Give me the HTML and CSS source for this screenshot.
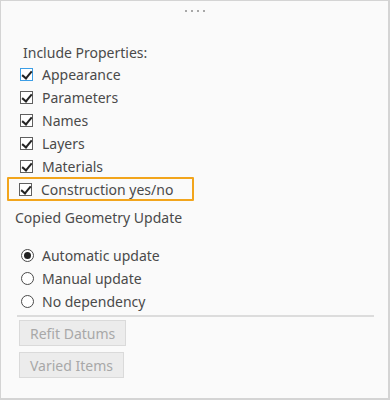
FILE: index.html
```html
<!DOCTYPE html>
<html>
  <head>
    <title>Copy Geometry Options</title>
    <link rel="stylesheet" href="styles.css">
  </head>
  <body>
    <div class="panel">
      <div class="grip"><span></span><span></span><span></span><span></span></div>
      <div class="section">
        <div class="heading">Include Properties:</div>
        <label class="option focused"><span class="box checked"></span>Appearance</label>
        <label class="option"><span class="box checked"></span>Parameters</label>
        <label class="option"><span class="box checked"></span>Names</label>
        <label class="option"><span class="box checked"></span>Layers</label>
        <label class="option"><span class="box checked"></span>Materials</label>
        <label class="option highlight"><span class="box checked"></span>Construction yes/no</label>
      </div>
      <div class="subtitle">Copied Geometry Update</div>
      <div class="radios">
        <label class="option"><span class="radio on"></span>Automatic update</label>
        <label class="option"><span class="radio"></span>Manual update</label>
        <label class="option"><span class="radio"></span>No dependency</label>
      </div>
      <div class="actions">
        <button disabled>Refit Datums</button>
        <button disabled>Varied Items</button>
      </div>
    </div>
  </body>
</html>
```

FILE: styles.css
```css
body {
  margin: 0;
  background-color: #fff;
  font-family: "Noto Sans", "Open Sans", sans-serif;
  font-size: 14px;
  color: #4a4a4a;
}

.panel {
  box-sizing: border-box;
  width: 390px;
  height: 400px;
  border: 1px solid #d4d4d4;
  border-right-width: 2px;
  border-bottom-width: 2px;
  background-color: #fafafa;
  padding: 0 14px;
}

.grip {
  display: flex;
  justify-content: center;
  gap: 4px;
  padding-top: 9px;
  height: 40px;
  box-sizing: border-box;
}

.grip span {
  width: 2px;
  height: 2px;
  background-color: #a8a8a8;
}

.section {
  padding-left: 4px;
}

.heading {
  height: 22px;
  line-height: 24px;
  padding-left: 4px;
}

.option {
  display: flex;
  align-items: center;
  height: 23px;
}

.box {
  box-sizing: border-box;
  width: 13px;
  height: 13px;
  border: 1px solid #5f5f5f;
  background-color: #fff;
  margin-left: 1px;
  margin-right: 9px;
  position: relative;
}

.box.checked::after {
  content: "";
  position: absolute;
  left: 3px;
  top: 0px;
  width: 4px;
  height: 8px;
  border: solid #222;
  border-width: 0 2px 2px 0;
  transform: rotate(40deg);
}

.focused .box {
  border-color: #3c9ee6;
}

.highlight {
  box-sizing: content-box;
  height: 20px;
  width: 174px;
  margin: -1px 0 -1px -12px;
  padding-left: 9px;
  border: 2px solid #f2a51c;
  border-radius: 1px;
}

.subtitle {
  padding-top: 6px;
  height: 24px;
  line-height: 24px;
}

.radios {
  padding: 14px 0 2px 4px;
  margin-left: 2px;
  border-bottom: 2px solid #dcdcdc;
}

.radio {
  box-sizing: border-box;
  width: 13px;
  height: 13px;
  border-radius: 50%;
  border: 1px solid #4a4a4a;
  background-color: #fff;
  margin-right: 8px;
  position: relative;
}

.radio.on::after {
  content: "";
  position: absolute;
  left: 2px;
  top: 2px;
  width: 7px;
  height: 7px;
  border-radius: 50%;
  background-color: #222;
}

.actions {
  display: flex;
  flex-direction: column;
  align-items: flex-start;
  gap: 6px;
  padding: 3px 0 0 4px;
}

button {
  font-family: inherit;
  font-size: 14px;
  color: #a8a8a8;
  background-color: #ececec;
  border: 1px solid #dadada;
  border-radius: 0;
  height: 26px;
  padding: 0 10px;
}
```
